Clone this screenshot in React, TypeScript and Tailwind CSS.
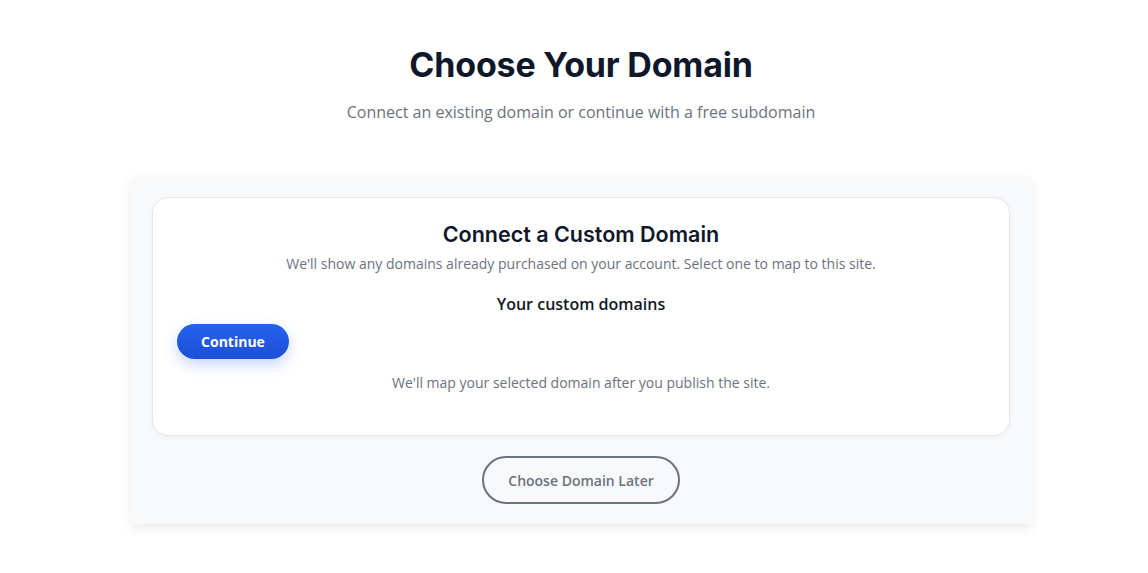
export default function App() {
  return (
    <div className="min-h-screen bg-white pl-[14px] font-['Open_Sans',sans-serif]">
      <div className="flex flex-col items-center pt-[42px]">
        <h1 className="font-['Inter',sans-serif] text-[34px] font-bold leading-[46px] tracking-[-0.2px] text-[#0f172a]">
          Choose Your Domain
        </h1>
        <p className="mt-[13px] text-[16px] leading-[22px] text-[#6b7280]">
          Connect an existing domain or continue with a free subdomain
        </p>
      </div>

      <div className="mx-auto mt-[54px] w-[902px] bg-[#f8f9fb] px-[22px] pb-[20px] pt-[20px] shadow-[0_4px_10px_rgba(0,0,0,0.08)]">
        <div className="rounded-[16px] border border-[#e5e7eb] bg-white px-[24px] pb-[42px] pt-[22px] shadow-[0_2px_6px_rgba(0,0,0,0.04)]">
          <h2 className="text-center font-['Inter',sans-serif] text-[21.5px] font-semibold leading-[28px] text-[#0f172a]">
            Connect a Custom Domain
          </h2>
          <p className="mt-[6px] text-center text-[14px] leading-[20px] text-[#6b7280]">
            We'll show any domains already purchased on your account. Select one to map to this site.
          </p>
          <h3 className="mt-[19px] text-center text-[16px] font-semibold leading-[22px] text-[#111827]">
            Your custom domains
          </h3>
          <div className="mt-[9px]">
            <button className="h-[35px] w-[112px] rounded-full bg-gradient-to-b from-[#2563eb] to-[#1d4ed8] text-[14px] font-bold text-white shadow-[0_6px_14px_rgba(37,99,235,0.25)]">
              Continue
            </button>
          </div>
          <p className="mt-[14px] text-center text-[14px] leading-[20px] text-[#6b7280]">
            We'll map your selected domain after you publish the site.
          </p>
        </div>
        <div className="mt-[20px] flex justify-center">
          <button className="h-[48px] w-[198px] rounded-full border-2 border-[#6b7280] bg-transparent text-[14px] font-semibold text-[#6b7280]">
            Choose Domain Later
          </button>
        </div>
      </div>
    </div>
  );
}
